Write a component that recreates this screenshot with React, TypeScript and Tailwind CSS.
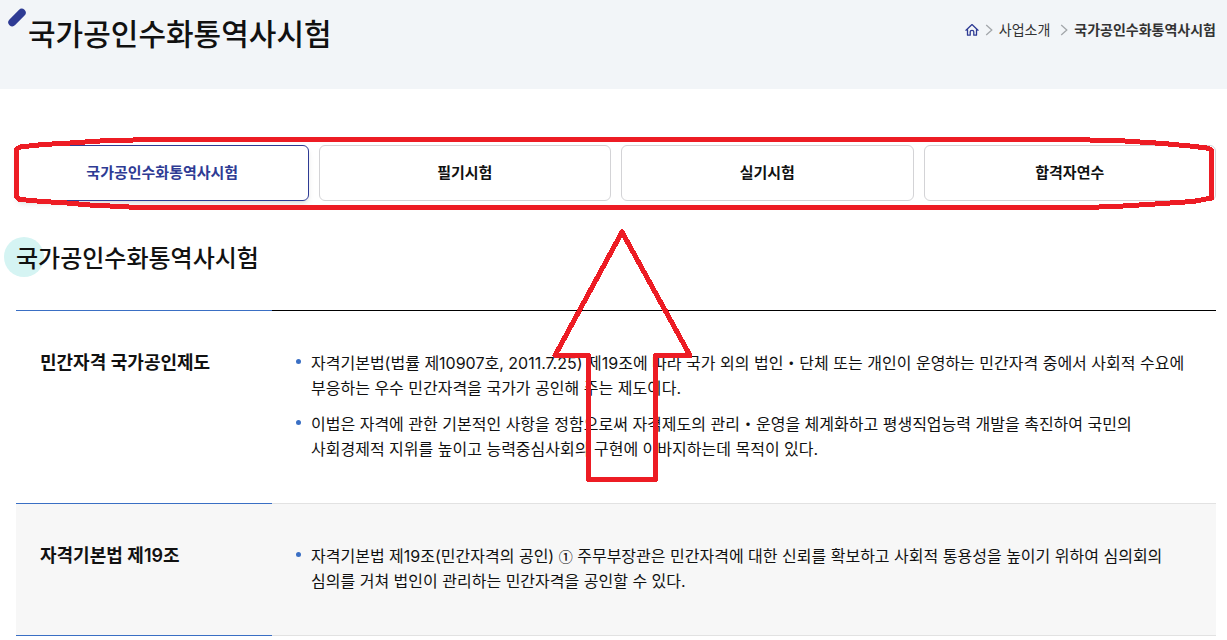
import React from 'react';

const tabs = ['국가공인수화통역사시험', '필기시험', '실기시험', '합격자연수'];

const rows = [
  {
    title: '민간자격 국가공인제도',
    items: [
      '자격기본법(법률 제10907호, 2011.7.25) 제19조에 따라 국가 외의 법인・단체 또는 개인이 운영하는 민간자격 중에서 사회적 수요에 부응하는 우수 민간자격을 국가가 공인해 주는 제도이다.',
      '이법은 자격에 관한 기본적인 사항을 정함으로써 자격제도의 관리・운영을 체계화하고 평생직업능력 개발을 촉진하여 국민의 사회경제적 지위를 높이고 능력중심사회의 구현에 이바지하는데 목적이 있다.',
    ],
  },
  {
    title: '자격기본법 제19조',
    items: [
      <>
        자격기본법 제19조(민간자격의 공인) <span className="font-['Noto_Sans_CJK_KR',sans-serif] text-sm font-medium">①</span> 주무부장관은
        민간자격에 대한 신뢰를 확보하고 사회적 통용성을 높이기 위하여 심의회의 심의를 거쳐 법인이 관리하는 민간자격을
        공인할 수 있다.
      </>,
    ],
  },
];

const Chevron: React.FC = () => (
  <svg width="8" height="12" viewBox="0 0 8 12" fill="none" stroke="#a3a7ab" strokeWidth="1.3">
    <path d="M1.2 1 6.8 6 1.2 11" />
  </svg>
);

const Breadcrumb: React.FC = () => (
  <nav aria-label="breadcrumb" className="flex items-center text-sm leading-5 text-[#333333]">
    <a href="#" aria-label="홈">
      <svg width="14" height="14" viewBox="0 0 14 14" fill="none" stroke="#2e3b94" strokeWidth="1.3" strokeLinejoin="round" strokeLinecap="round">
        <path d="M2.5 6.6V12.2H5.2V8.8Q5.2 7.4 7 7.4T8.8 8.8V12.2H11.5V6.6" />
        <path d="M1 7.2 7 1.6 13 7.2" />
      </svg>
    </a>
    <span className="mx-1.5"><Chevron /></span>
    <a href="#">사업소개</a>
    <span className="ml-2.5 mr-1.5"><Chevron /></span>
    <a href="#" className="font-bold" aria-current="page">국가공인수화통역사시험</a>
  </nav>
);

const Tabs: React.FC = () => (
  <nav className="grid grid-cols-4 gap-2.5">
    {tabs.map((tab, i) => (
      <a
        key={tab}
        href="#"
        className={
          i === 0
            ? 'flex h-14 items-center justify-center rounded-md border border-[#2e3b94] text-[15px] font-bold text-[#2e3b94] shadow-md shadow-black/10'
            : 'flex h-14 items-center justify-center rounded-md border border-[#d3d3d6] text-[15px] font-bold text-[#111111]'
        }
      >
        {tab}
      </a>
    ))}
  </nav>
);

const InfoTable: React.FC = () => (
  <table className="w-full table-fixed border-separate border-spacing-0">
    <tbody>
      {rows.map((row, i) => (
        <tr key={row.title} className={i % 2 ? 'bg-[#f7f7f7]' : 'bg-white'}>
          <th
            scope="row"
            className={
              i === rows.length - 1
                ? 'w-64 border-y border-[#3a6fc4] px-6 pt-10 text-left align-top text-lg leading-6 font-semibold'
                : 'w-64 border-t border-[#3a6fc4] px-6 pt-10 text-left align-top text-lg leading-6 font-semibold'
            }
          >
            {row.title}
          </th>
          <td
            className={
              i === rows.length - 1
                ? 'border-y border-[#e2e2e2] px-6 pt-10 pb-[41px]'
                : 'border-t border-black px-6 pt-10 pb-[41px]'
            }
          >
            <ul className="flex flex-col gap-[11px]">
              {row.items.map((item, n) => (
                <li key={n} className="flex items-start gap-2.5 text-base leading-[25px] break-keep">
                  <span className="mt-2 size-[5px] shrink-0 rounded-full bg-[#3a6fc4]" />
                  <span>{item}</span>
                </li>
              ))}
            </ul>
          </td>
        </tr>
      ))}
    </tbody>
  </table>
);

// hand-drawn markers that point at the tab bar
const Markers: React.FC = () => (
  <svg
    aria-hidden="true"
    className="pointer-events-none absolute top-0 left-0"
    width="1227"
    height="500"
    viewBox="0 0 1227 500"
    fill="none"
    stroke="#ed1c24"
    strokeWidth="5"
    strokeLinejoin="round"
    shapeRendering="crispEdges"
  >
    <path d="M16.5 149 20 147 43 144.5 70 143 100 141 133 140 152 139.5H1072L1125 141 1163 143.5 1190 146 1207 148 1211.5 150V198L1193 201.5 1163 203.5 1123 206 1087 207.5H137L120 206.5 90 205 67 203 43 201.5 20 199.5 16.5 197Z" />
    <path d="M622 232 555 355.5H588.5V479.5H655.5V355.5H690Z" />
  </svg>
);

const App: React.FC = () => {
  return (
    <div className="relative bg-white font-['Inter','Noto_Sans_CJK_KR',sans-serif] text-[#111111]">
      <header className="flex h-[89px] items-start justify-between bg-[#f2f5f8] pr-[11px] pl-7">
        <h1 className="relative mt-3 text-[30px] leading-[44px] font-medium">
          <svg className="absolute -top-1 -left-5" width="18" height="19" viewBox="0 0 18 19" fill="none" stroke="#2e3b94" strokeWidth="8" strokeLinecap="round">
            <path d="M4.3 14.3 13.7 4.7" />
          </svg>
          국가공인수화통역사시험
        </h1>
        <div className="mt-5">
          <Breadcrumb />
        </div>
      </header>

      <main className="pt-14 pr-[11px] pl-4">
        <Tabs />
        <h2 className="relative mt-10 mb-[33px] text-2xl leading-9 font-medium">
          <span className="absolute -top-1 -left-3 size-10 rounded-full bg-[#d5f4f3]" />
          <span className="relative">국가공인수화통역사시험</span>
        </h2>
        <InfoTable />
      </main>

      <Markers />
    </div>
  );
};

export default App;
